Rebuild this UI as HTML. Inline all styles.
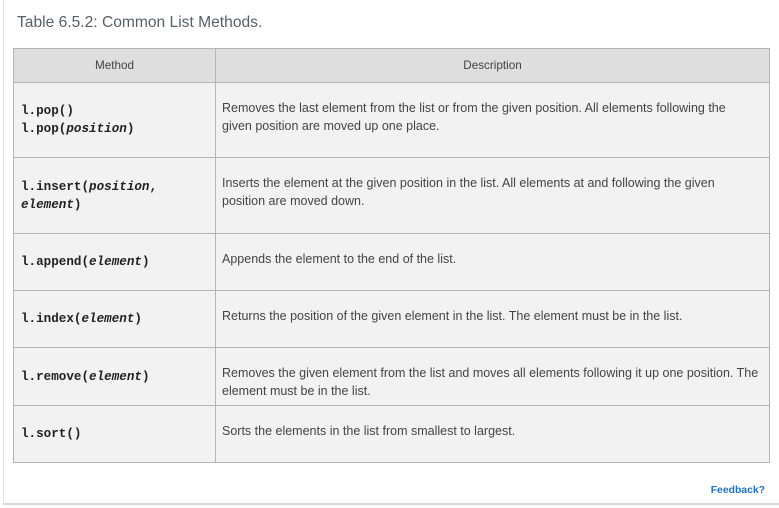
<!DOCTYPE html>
<html><head><style>
body{margin:0;width:779px;height:508px;background:#fff;font-family:"Liberation Sans",sans-serif;position:relative;overflow:hidden}
.frame{position:absolute;left:3px;top:0;width:776px;height:505px;border-left:1px solid #e3e3e3;border-bottom:2px solid #d8d8d8;box-sizing:border-box}
.cap{position:absolute;left:17px;top:14px;font-size:15.6px;color:#56606a;font-weight:300}
table{position:absolute;left:13px;top:48px;width:757px;border-collapse:collapse;table-layout:fixed}
td,th{border:1px solid #b5b5b5;background:#f2f2f2;font-size:12px;color:#333;overflow:hidden}
th{background:#dedede;font-weight:normal;height:33px;color:#444;padding:0;font-size:11.7px}
td.c{padding:0 0 0 7px;font-family:"Liberation Mono",monospace;font-weight:bold;font-size:12.6px;line-height:18px;color:#222}
td.c i{font-style:italic}
td.d{vertical-align:top;padding:16px 0 0 6px;line-height:18px;color:#444;font-size:12.5px;white-space:nowrap}
.fb{position:absolute;right:14px;top:485px;font-size:10.4px;font-weight:bold;color:#1a73c8}
</style></head><body>
<div class="frame"></div>
<div class="cap">Table 6.5.2: Common List Methods.</div>
<table>
<tr><th style="width:201px">Method</th><th>Description</th></tr>
<tr style="height:75px"><td class="c">l.pop()<br>l.pop(<i>position</i>)</td><td class="d">Removes the last element from the list or from the given position. All elements following the<br>given position are moved up one place.</td></tr>
<tr style="height:76px"><td class="c">l.insert(<i>position</i>,<br><i>element</i>)</td><td class="d">Inserts the element at the given position in the list. All elements at and following the given<br>position are moved down.</td></tr>
<tr style="height:57px"><td class="c">l.append(<i>element</i>)</td><td class="d">Appends the element to the end of the list.</td></tr>
<tr style="height:57px"><td class="c">l.index(<i>element</i>)</td><td class="d">Returns the position of the given element in the list. The element must be in the list.</td></tr>
<tr style="height:58px"><td class="c">l.remove(<i>element</i>)</td><td class="d">Removes the given element from the list and moves all elements following it up one position. The<br>element must be in the list.</td></tr>
<tr style="height:57px"><td class="c">l.sort()</td><td class="d">Sorts the elements in the list from smallest to largest.</td></tr>
</table>
<div class="fb">Feedback?</div>
</body></html>
